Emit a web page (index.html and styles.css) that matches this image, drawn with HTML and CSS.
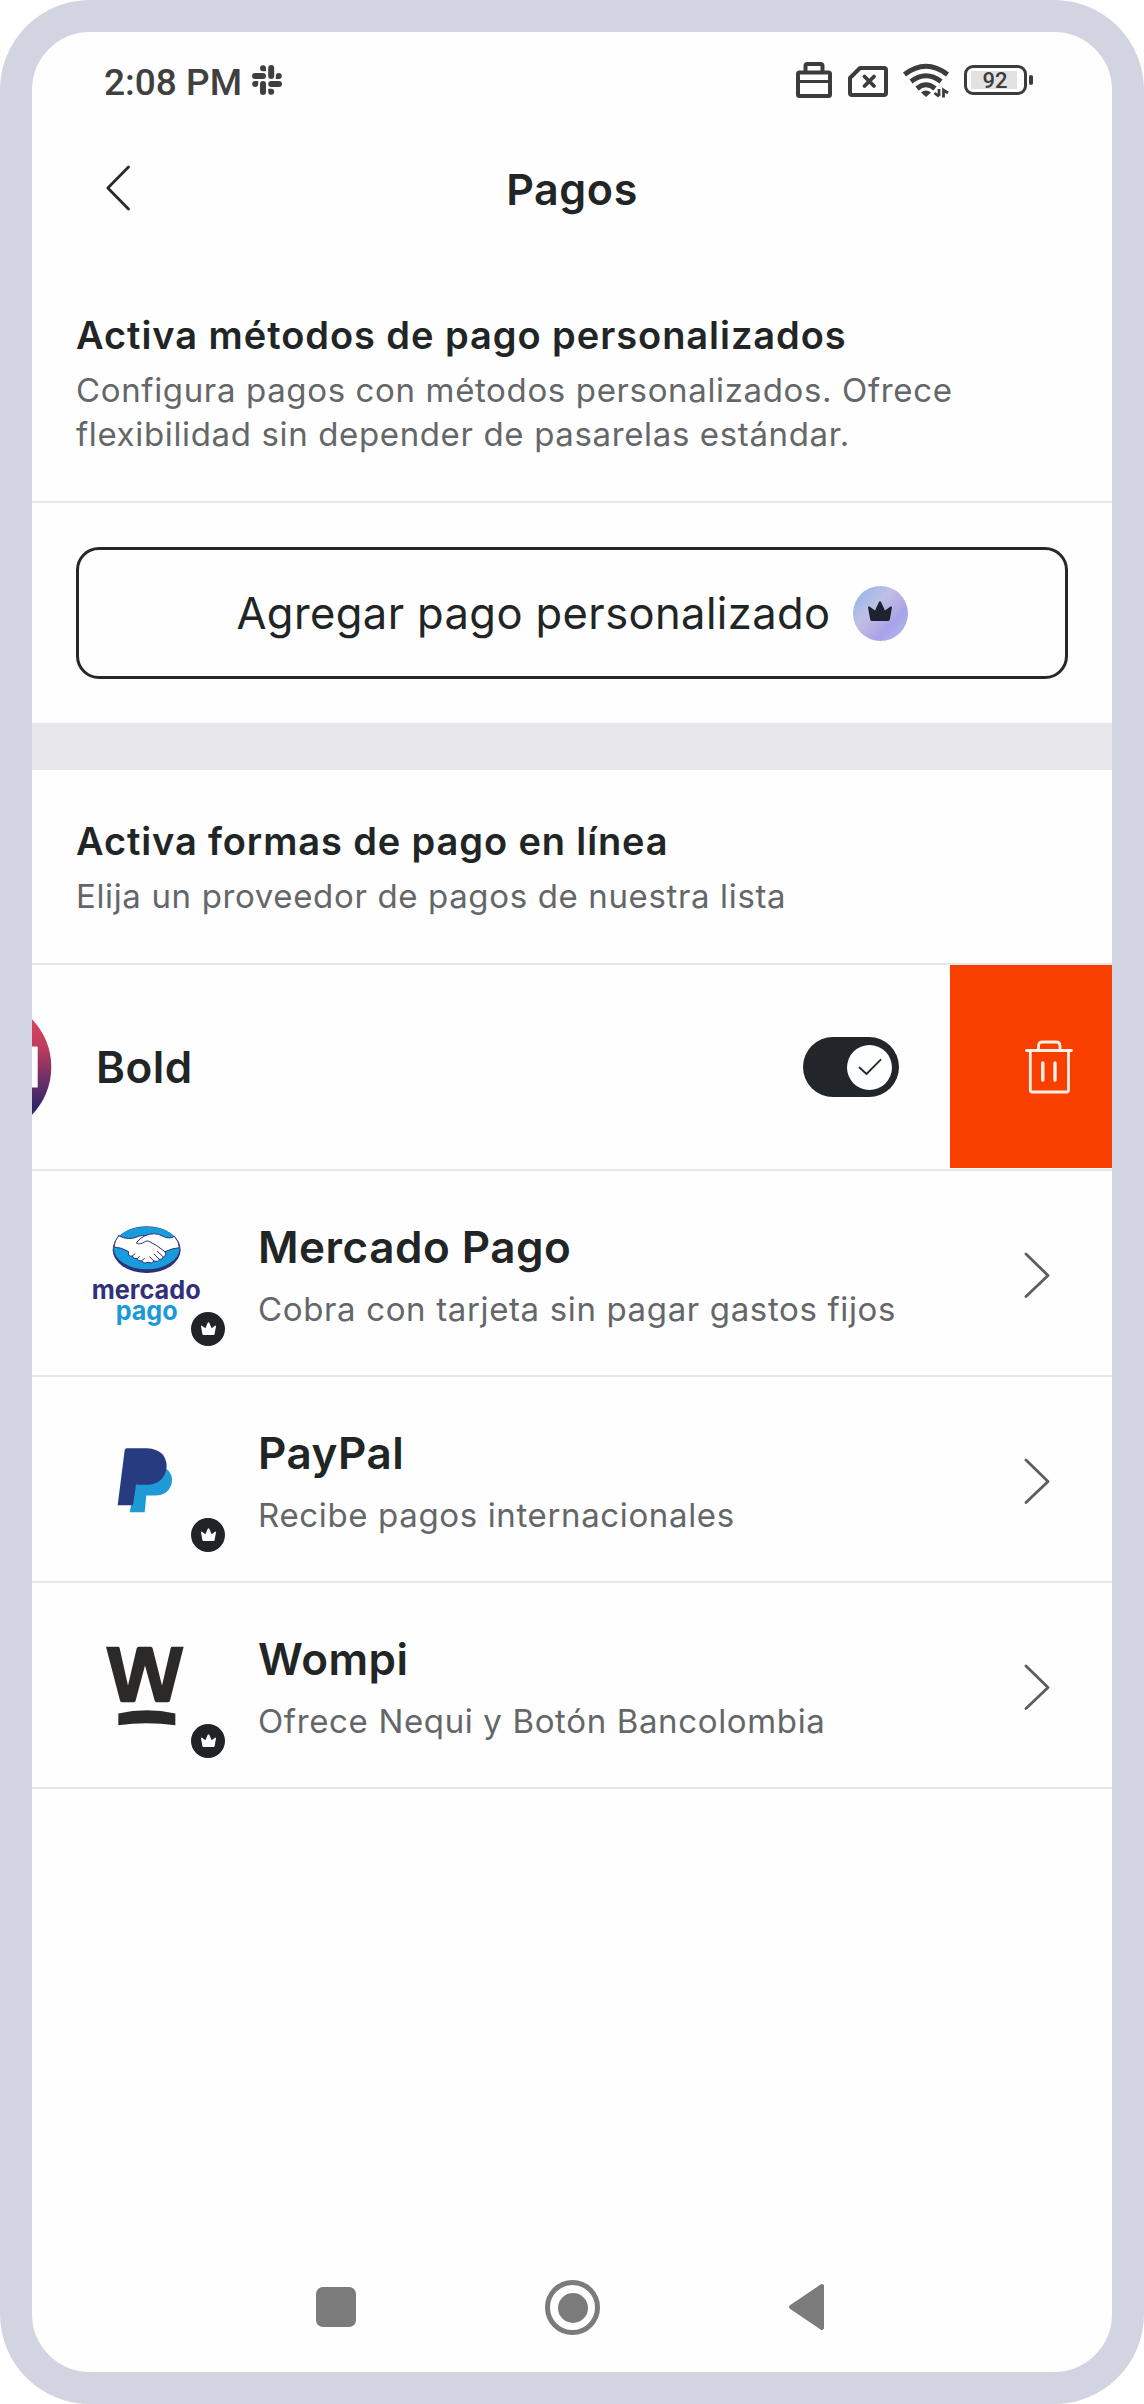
FILE: index.html
```html
<!DOCTYPE html>
<html lang="es">
<head>
<meta charset="utf-8">
<title>Pagos</title>
<link rel="stylesheet" href="styles.css">
</head>
<body>
<svg class="defs" width="0" height="0">
  <symbol id="crown" viewBox="0 0 24 20"><path d="M0 6.5Q0 5 1.5 5.6L7 9.5L10.8 1.2Q12 -0.8 13.2 1.2L17 9.5L22.500 5.600Q24 5 24 6.500L21.800 18.500Q21.500 20 20 20H4Q2.500 20 2.200 18.500Z" fill="currentColor"/></symbol>
  <symbol id="chevron" viewBox="0 0 26 46"><path d="M2 2L24 23.500L2 44.500" fill="none" stroke="#5c5d5e" stroke-width="2.800" stroke-linecap="round" stroke-linejoin="round"/></symbol>
</svg>
<div class="phone">
  <header class="status">
    <span class="time">2:08 PM</span>
    <svg class="slack" width="30" height="30" viewBox="0 0 30 30" fill="#404040">
      <rect x="16.200" y="0" width="6" height="14" rx="3"/><rect x="0" y="8" width="14" height="6" rx="3"/><rect x="8" y="16" width="6" height="14" rx="3"/><rect x="16.200" y="16" width="13.800" height="6" rx="3"/>
      <path d="M14 6.200V3A3 3 0 1 0 11 6.200ZM23.800 14H27A3 3 0 1 0 23.800 11ZM16.200 23.800V27A3 3 0 1 0 19.200 23.800ZM6.200 16H3A3 3 0 1 0 6.200 19Z"/>
    </svg>
    <div class="indicators">
      <svg width="36" height="36" viewBox="0 0 36 36" fill="none" stroke="#3c3c3c" stroke-width="4"><rect x="2" y="10.500" width="32" height="23.500" rx="1.500"/><path d="M2 19.500H34" stroke-width="3.200"/><path d="M9.500 10V4Q9.500 2 11.500 2H24.500Q26.500 2 26.500 4V10"/></svg>
      <svg width="40" height="36" viewBox="0 0 40 36" fill="none" stroke="#3c3c3c" stroke-width="4"><path d="M12 6H36Q38 6 38 8V31Q38 33 36 33H4Q2 33 2 31V16Z" stroke-linejoin="round"/><path d="M16.500 14.500L26 24M26 14.500L16.500 24" stroke-linecap="round" stroke-width="3.800"/></svg>
      <svg width="46" height="36" viewBox="0 0 46 36" fill="none" stroke="#3c3c3c" stroke-width="5"><path d="M1.500 12.500Q23 -4 44.500 12.500"/><path d="M8 19.500Q23 8 38 19.500"/><path d="M14 26.500Q23 19 32 26.500"/><path d="M23 35L18 30.500Q23 26.500 28 30.500Z" fill="#3c3c3c" stroke="none"/><path d="M36 27V34M31.500 31L36 34.500M40.500 35.500V28L45 31" stroke-width="2.800"/></svg>
      <div class="battery"><span class="level">92</span></div>
    </div>
  </header>
  <nav class="topbar">
    <svg class="back" width="24" height="46" viewBox="0 0 24 46"><path d="M22.500 2L1.800 23L22.500 44" fill="none" stroke="#2a2a2a" stroke-width="2.800" stroke-linecap="round" stroke-linejoin="round"/></svg>
    <h1>Pagos</h1>
  </nav>

  <section class="intro custom">
    <h2>Activa métodos de pago personalizados</h2>
    <p>Configura pagos con métodos personalizados. Ofrece<br>flexibilidad sin depender de pasarelas estándar.</p>
  </section>
  <section class="action">
    <button class="add">Agregar pago personalizado
      <span class="premium"><svg width="24" height="20"><use href="#crown"/></svg></span>
    </button>
  </section>
  <div class="band"></div>
  <section class="intro online">
    <h2>Activa formas de pago en línea</h2>
    <p>Elija un proveedor de pagos de nuestra lista</p>
  </section>

  <ul class="providers">
    <li class="row swiped">
      <svg width="20" height="138" viewBox="0 0 20 138"><defs><linearGradient id="bold-fill" x1="0" y1="0" x2="0" y2="1"><stop offset=".15" stop-color="#d9455c"/><stop offset=".36" stop-color="#bd3c5c"/><stop offset=".6" stop-color="#6b2f68"/><stop offset=".8" stop-color="#2f2566"/></linearGradient></defs><circle cx="-49.700" cy="69" r="69" fill="url(#bold-fill)"/><path d="M0 48.500H5.700V89.500H0Z" fill="#fff"/></svg>
      <h3>Bold</h3>
      <span class="toggle"><span class="knob"><svg width="24" height="18" viewBox="0 0 24 18"><path d="M1.500 9.500L8.500 16L22.500 1.800" fill="none" stroke="#24282c" stroke-width="1.800" stroke-linecap="round" stroke-linejoin="round"/></svg></span></span>
      <span class="delete"><svg width="48" height="54" viewBox="0 0 48 54" fill="none" stroke="#fff0e6" stroke-width="2.800" stroke-linecap="round" stroke-linejoin="round"><path d="M1.500 10.500H46.500"/><path d="M13.500 10V6Q13.500 2 17.500 2H31Q35 2 35 6V10"/><path d="M5.300 11V50Q5.300 52 7.300 52H41.500Q43.500 52 43.500 50V11"/><path d="M17.800 23V40M30 23V40" stroke-width="3.400"/></svg></span>
    </li>
    <li class="row">
      <span class="logo">
        <svg width="110" height="106" viewBox="0 0 330 318">
          <ellipse cx="167" cy="74" rx="102" ry="70" fill="#2d3277"/>
          <ellipse cx="167" cy="69" rx="99" ry="64" fill="#179cdc"/>
          <g transform="translate(2 0)" fill="#fff" stroke="#2d3277" stroke-width="3" stroke-linejoin="round" stroke-linecap="round">
            <path d="M81 32Q111 49 143 33Q153 31 160 32Q190 20 212 33Q234 44 248 34Q263 51 263 68Q240 70 220 80Q226 92 215 96Q213 105 203 103Q198 113 187 108Q181 118 171 112Q157 118 149 108Q139 109 136 101Q124 102 122 93Q107 96 111 80Q90 67 67 66Q68 48 81 32Z"/>
            <path d="M160 32Q144 39 134 54Q146 61 161 49L170 48Q193 58 220 80M203 103L188 88M215 96L197 79M187 108L174 96M149 108L158 101M136 101L143 95M122 93L130 86" fill="none"/>
          </g>
          <text class="mp-name" x="2" y="222" textLength="327" lengthAdjust="spacingAndGlyphs">mercado</text>
          <text class="mp-pay" x="74" y="285" textLength="186" lengthAdjust="spacingAndGlyphs">pago</text>
        </svg>
        <span class="badge"><svg width="15" height="13" viewBox="0 0 24 20" preserveAspectRatio="none"><use href="#crown"/></svg></span>
      </span>
      <div class="info"><h3>Mercado Pago</h3><p>Cobra con tarjeta sin pagar gastos fijos</p></div>
      <svg class="go" width="26" height="46"><use href="#chevron"/></svg>
    </li>
    <li class="row">
      <span class="logo">
        <svg width="110" height="106" viewBox="93 91.500 330 318"><path d="M316 202Q342 222 335 250Q324 286 284 285H259L254 335H209L226 254Z" fill="#1f9ad6"/><path d="M200 143H262Q319 147 320 198Q315 248 266 253H228L219 314H173L194 149Q195 143 200 143Z" fill="#263b80"/></svg>
        <span class="badge"><svg width="15" height="13" viewBox="0 0 24 20" preserveAspectRatio="none"><use href="#crown"/></svg></span>
      </span>
      <div class="info"><h3>PayPal</h3><p>Recibe pagos internacionales</p></div>
      <svg class="go" width="26" height="46"><use href="#chevron"/></svg>
    </li>
    <li class="row">
      <span class="logo">
        <svg width="110" height="106" viewBox="93 79.500 330 318" fill="#2b2a29"><path d="M138 109H174Q178 109 179 113L204 225L230 114Q231 109 236 109H272Q277 109 278 114L306 225L332 113Q333 109 337 109H371L330 270Q329 275 324 275H290Q285 275 284 270L255 165L227 270Q226 275 221 275H186Q181 275 180 270Z"/><path d="M175 309Q260 290 346 309V344Q260 332 175 344Z"/></svg>
        <span class="badge"><svg width="15" height="13" viewBox="0 0 24 20" preserveAspectRatio="none"><use href="#crown"/></svg></span>
      </span>
      <div class="info"><h3>Wompi</h3><p>Ofrece Nequi y Botón Bancolombia</p></div>
      <svg class="go" width="26" height="46"><use href="#chevron"/></svg>
    </li>
  </ul>

  <footer class="sysnav">
    <span class="recent"></span>
    <span class="home"></span>
    <svg width="37" height="48" viewBox="0 0 37 48"><path d="M34 3L3 24L34 45Z" fill="#7b7b7b" stroke="#7b7b7b" stroke-width="4" stroke-linejoin="round"/></svg>
  </footer>
</div>
</body>
</html>
```
FILE: styles.css
```css
* { box-sizing: border-box; margin: 0; padding: 0; }
body { background: #fff; font-family: Inter, "Liberation Sans", sans-serif; color: #222525; }
svg { display: block; flex: none; overflow: visible; }
.defs { position: absolute; }
.phone { width: 1144px; height: 2404px; border: 32px solid #d2d4e1; border-radius: 90px; background: #fefefe; display: flex; flex-direction: column; overflow: hidden; }

.status { height: 98px; padding: 0 79px 0 72px; display: flex; align-items: center; }
.time { font: 500 37px/98px Roboto, sans-serif; color: #404040; padding-top: 3px; }
.slack { margin-left: 10px; margin-top: -2px; }
.indicators { display: flex; margin-left: auto; align-items: center; margin-top: -2px; }
.indicators svg + svg { margin-left: 15.500px; }
.battery { position: relative; width: 63px; height: 30px; margin: 0 6px 0 15px; border: 3px solid #3c3c3c; border-radius: 9px; padding: 3px 7px 3px 4px; display: flex; }
.battery::after { content: ""; position: absolute; left: 62px; top: 7px; width: 4px; height: 10px; border-radius: 2px; background: #3c3c3c; }
.level { flex: 1; display: flex; align-items: center; justify-content: center; background: #e2e2e2; font: 500 22px/18px Roboto, sans-serif; color: #3c3c3c; padding: 2px 0 0 2px; }

.topbar { height: 116px; padding: 0 74px; display: grid; grid-template-columns: 1fr auto 1fr; align-items: center; }
h1 { font-size: 43px; font-weight: 600; line-height: 56px; letter-spacing: .6px; padding-top: 1px; }

.intro { padding: 0 44px; border-bottom: 2px solid #e7e7e8; }
.custom { height: 257px; padding-top: 61px; }
.online { height: 195px; padding-top: 43px; }
h2 { font-size: 38px; font-weight: 600; line-height: 56px; letter-spacing: .95px; margin-bottom: 5px; white-space: nowrap; }
.online h2 { letter-spacing: .88px; }
p { font-size: 33px; line-height: 44px; letter-spacing: .64px; color: #646768; white-space: nowrap; }

.action { height: 220px; padding: 44px; }
.add { width: 100%; height: 132px; border: 3px solid #262828; border-radius: 23px; background: none; display: flex; align-items: center; justify-content: center; gap: 22px; font: 400 43.500px/56px Inter, sans-serif; letter-spacing: .4px; color: #222525; }
.premium { width: 55px; height: 55px; border-radius: 50%; display: grid; place-items: center; color: #1d2230; background: linear-gradient(135deg, #9ab8ec 12%, #bfc0e4 38%, #b9b0e6 55%, #a6a3ea 70%, #b4b4ee 90%); }
.premium svg { margin-bottom: 4px; }
.band { height: 47px; background: #e8e8eb; }

.providers { list-style: none; flex: 1; }
.row { height: 206px; padding-top: 3px; border-bottom: 2px solid #e7e7e8; display: flex; align-items: center; }
.row h3 { font-size: 44px; font-weight: 600; line-height: 56px; letter-spacing: .5px; white-space: nowrap; }
.logo { position: relative; width: 110px; height: 106px; margin: 6px 0 0 59px; }
.badge { position: absolute; left: 100px; top: 87px; width: 34px; height: 34px; border-radius: 50%; background: #202426; color: #fff; display: grid; place-items: center; }
.info { margin-left: 57px; display: flex; flex-direction: column; gap: 12px; }
.go { margin-left: auto; margin-right: 62px; }
.mp-name, .mp-pay { font: 700 78px Inter, sans-serif; fill: #32307a; }
.mp-pay { fill: #1a9bd7; }

.row.swiped { padding-top: 0; }
.swiped h3 { margin-left: 44px; }
.toggle { margin-left: auto; width: 96px; height: 60px; border-radius: 30px; background: #22262a; display: flex; align-items: center; justify-content: flex-end; padding-right: 7px; }
.knob { width: 45px; height: 45px; border-radius: 50%; background: #fcfeff; display: grid; place-items: center; }
.delete { width: 162px; height: 203px; align-self: flex-start; margin-left: 51px; padding-left: 75px; background: #f93f00; display: flex; align-items: center; }

.sysnav { height: 130px; padding: 0 287px 0 284px; display: flex; align-items: center; justify-content: space-between; }
.recent { width: 40px; height: 40px; border-radius: 7px; background: #7b7b7b; }
.home { width: 55px; height: 55px; border-radius: 50%; border: 5px solid #7b7b7b; padding: 7.500px; background: #7b7b7b content-box; }
```
